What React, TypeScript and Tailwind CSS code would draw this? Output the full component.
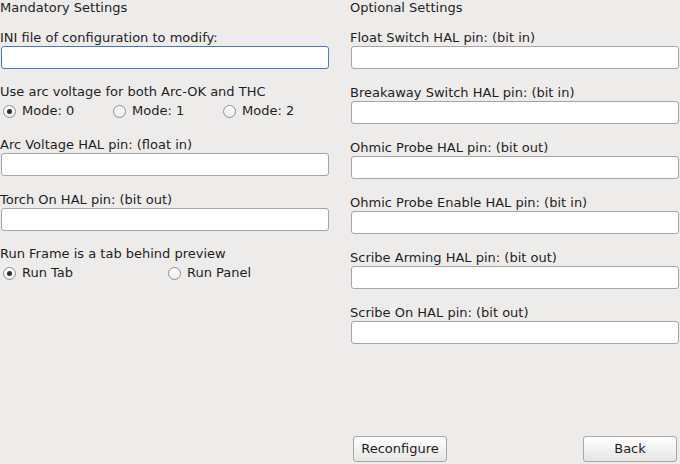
import React, { useState } from 'react';

const Field: React.FC<{ label: string; top: string; focused?: boolean }> = ({ label, top, focused }) => (
  <div className={top}>
    <div className="h-4 leading-4">{label}</div>
    <input
      type="text"
      className={`mx-px block h-[23px] w-[328px] rounded-[3px] border bg-white px-1 outline-none ${
        focused ? 'border-[#4a7bb5]' : 'border-[#a5a5a5]'
      }`}
    />
  </div>
);

const Radio: React.FC<{ label: string; checked: boolean; onClick: () => void; width: string }> = ({
  label,
  checked,
  onClick,
  width,
}) => (
  <button onClick={onClick} className={`flex h-5 items-center ${width}`}>
    <span className="ml-[3px] flex h-[13px] w-[13px] items-center justify-center rounded-full border border-[#8f8f8f] bg-gradient-to-b from-white to-[#ececec]">
      {checked && <span className="h-[5px] w-[5px] rounded-full bg-[#2e2e2e]" />}
    </span>
    <span className="ml-[6px]">{label}</span>
  </button>
);

const PushButton: React.FC<{ label: string }> = ({ label }) => (
  <button className="h-[26px] w-[94px] rounded-[3px] border border-[#a8a8a8] bg-gradient-to-b from-white to-[#e6e5e4] text-[#1c1c1c]">
    {label}
  </button>
);

export default function App() {
  const [mode, setMode] = useState(0);
  const [runTab, setRunTab] = useState(true);

  return (
    <div
      className="flex h-[464px] w-[680px] flex-col bg-[#edeceb] text-[13px] text-[#1e1e1e]"
      style={{ fontFamily: '"DejaVu Sans", sans-serif' }}
    >
      <div className="grid flex-1 grid-cols-[330px_330px] gap-x-5">
        {/* Mandatory */}
        <div className="flex flex-col">
          <div className="h-4 leading-4">Mandatory Settings</div>
          <Field label="INI file of configuration to modify:" top="mt-[14px]" focused />
          <div className="mt-[15px] h-4 leading-4">Use arc voltage for both Arc-OK and THC</div>
          <div className="mt-px flex">
            {[0, 1, 2].map((m) => (
              <Radio key={m} label={`Mode: ${m}`} checked={mode === m} onClick={() => setMode(m)} width="w-[110px]" />
            ))}
          </div>
          <Field label="Arc Voltage HAL pin: (float in)" top="mt-4" />
          <Field label="Torch On HAL pin: (bit out)" top="mt-4" />
          <div className="mt-[15px] h-4 leading-4">Run Frame is a tab behind preview</div>
          <div className="mt-px flex">
            <Radio label="Run Tab" checked={runTab} onClick={() => setRunTab(true)} width="w-[165px]" />
            <Radio label="Run Panel" checked={!runTab} onClick={() => setRunTab(false)} width="w-[165px]" />
          </div>
        </div>

        {/* Optional */}
        <div className="flex flex-col">
          <div className="h-4 leading-4">Optional Settings</div>
          <Field label="Float Switch HAL pin: (bit in)" top="mt-[14px]" />
          <Field label="Breakaway Switch HAL pin: (bit in)" top="mt-4" />
          <Field label="Ohmic Probe HAL pin: (bit out)" top="mt-4" />
          <Field label="Ohmic Probe Enable HAL pin: (bit in)" top="mt-4" />
          <Field label="Scribe Arming HAL pin: (bit out)" top="mt-4" />
          <Field label="Scribe On HAL pin: (bit out)" top="mt-4" />
          <div className="mt-auto flex justify-between pb-[2px] pl-[3px] pr-[3px]">
            <PushButton label="Reconfigure" />
            <PushButton label="Back" />
          </div>
        </div>
      </div>
    </div>
  );
}
